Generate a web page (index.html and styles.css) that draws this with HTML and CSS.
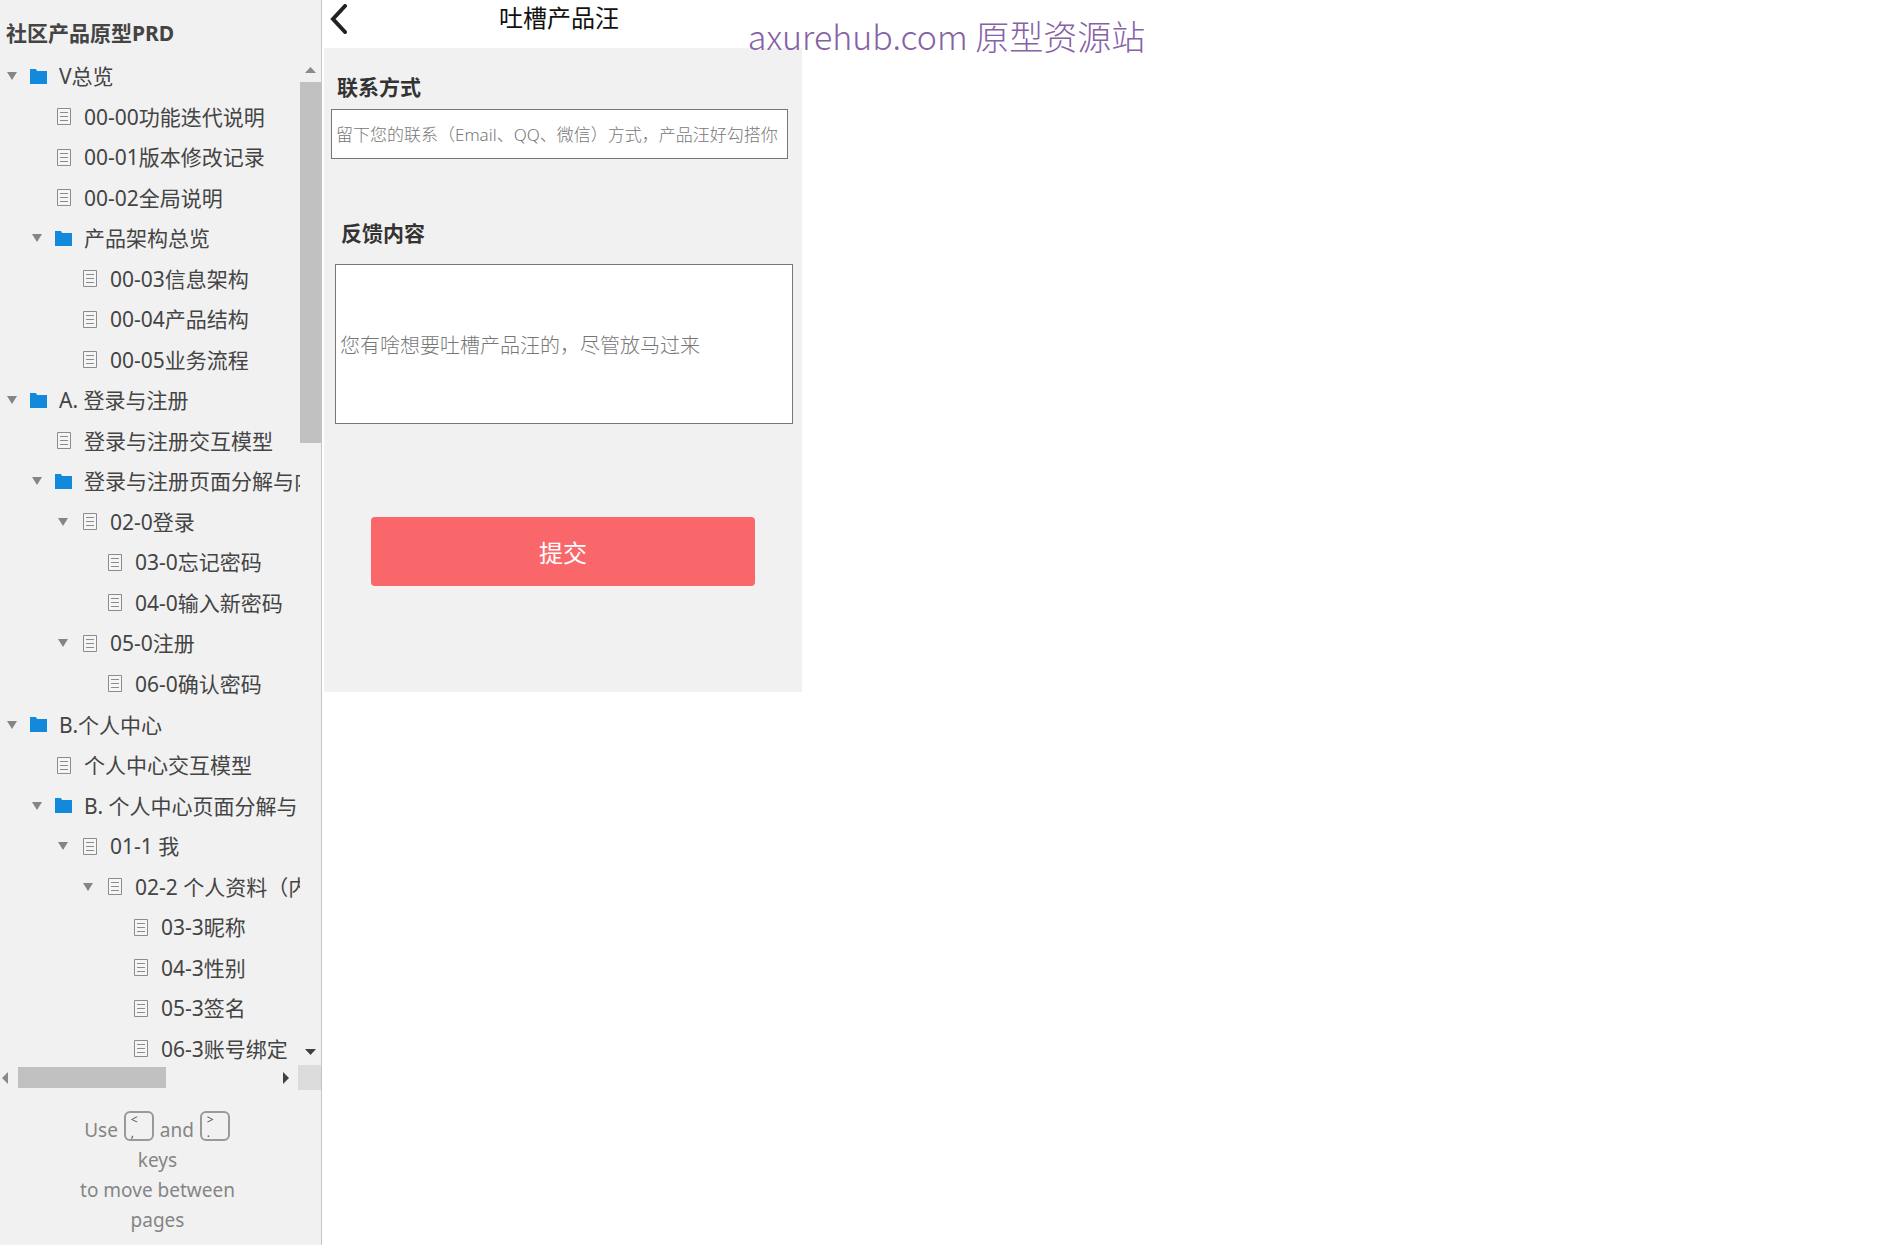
FILE: index.html
```
<!DOCTYPE html>
<html lang="zh-CN">
<head>
    <meta charset="UTF-8">
    <meta name="viewport" content="width=device-width, initial-scale=1.0">
    <title>社区产品原型PRD</title>
    <link rel="stylesheet" href="styles.css">
</head>
<body>
    <svg class="sprite" aria-hidden="true">
        <symbol id="folder" viewBox="0 0 17 17">
            <path d="M0 1h6l1 2h10v13H0z" fill="#1389dc"/>
        </symbol>
        <symbol id="page" viewBox="0 0 17 17">
            <path d="M2.500 .5h13v16h-13z" fill="#f5f5f5" stroke="#8c8c8c"/>
            <path d="M5 4.500h8M5 8.500h8M5 12.500h8" stroke="#8c8c8c"/>
        </symbol>
        <symbol id="arrow" viewBox="0 0 10 8">
            <path d="M0 0h10L5 8z" fill="#858585"/>
        </symbol>
    </svg>

    <div class="app">
        <aside class="sidebar">
            <h1 class="project-title">社区产品原型PRD</h1>

            <div class="tree-area">
                <nav class="tree-view">
                    <ul class="tree">
                        <li class="node level-0"><button class="toggle" aria-label="折叠"><svg><use href="#arrow"/></svg></button><svg class="icon"><use href="#folder"/></svg><a href="#">V总览</a></li>
                        <li class="node level-1"><span class="toggle"></span><svg class="icon"><use href="#page"/></svg><a href="#">00-00功能迭代说明</a></li>
                        <li class="node level-1"><span class="toggle"></span><svg class="icon"><use href="#page"/></svg><a href="#">00-01版本修改记录</a></li>
                        <li class="node level-1"><span class="toggle"></span><svg class="icon"><use href="#page"/></svg><a href="#">00-02全局说明</a></li>
                        <li class="node level-1"><button class="toggle" aria-label="折叠"><svg><use href="#arrow"/></svg></button><svg class="icon"><use href="#folder"/></svg><a href="#">产品架构总览</a></li>
                        <li class="node level-2"><span class="toggle"></span><svg class="icon"><use href="#page"/></svg><a href="#">00-03信息架构</a></li>
                        <li class="node level-2"><span class="toggle"></span><svg class="icon"><use href="#page"/></svg><a href="#">00-04产品结构</a></li>
                        <li class="node level-2"><span class="toggle"></span><svg class="icon"><use href="#page"/></svg><a href="#">00-05业务流程</a></li>
                        <li class="node level-0"><button class="toggle" aria-label="折叠"><svg><use href="#arrow"/></svg></button><svg class="icon"><use href="#folder"/></svg><a href="#">A. 登录与注册</a></li>
                        <li class="node level-1"><span class="toggle"></span><svg class="icon"><use href="#page"/></svg><a href="#">登录与注册交互模型</a></li>
                        <li class="node level-1"><button class="toggle" aria-label="折叠"><svg><use href="#arrow"/></svg></button><svg class="icon"><use href="#folder"/></svg><a href="#">登录与注册页面分解与内</a></li>
                        <li class="node level-2"><button class="toggle" aria-label="折叠"><svg><use href="#arrow"/></svg></button><svg class="icon"><use href="#page"/></svg><a href="#">02-0登录</a></li>
                        <li class="node level-3"><span class="toggle"></span><svg class="icon"><use href="#page"/></svg><a href="#">03-0忘记密码</a></li>
                        <li class="node level-3"><span class="toggle"></span><svg class="icon"><use href="#page"/></svg><a href="#">04-0输入新密码</a></li>
                        <li class="node level-2"><button class="toggle" aria-label="折叠"><svg><use href="#arrow"/></svg></button><svg class="icon"><use href="#page"/></svg><a href="#">05-0注册</a></li>
                        <li class="node level-3"><span class="toggle"></span><svg class="icon"><use href="#page"/></svg><a href="#">06-0确认密码</a></li>
                        <li class="node level-0"><button class="toggle" aria-label="折叠"><svg><use href="#arrow"/></svg></button><svg class="icon"><use href="#folder"/></svg><a href="#">B.个人中心</a></li>
                        <li class="node level-1"><span class="toggle"></span><svg class="icon"><use href="#page"/></svg><a href="#">个人中心交互模型</a></li>
                        <li class="node level-1"><button class="toggle" aria-label="折叠"><svg><use href="#arrow"/></svg></button><svg class="icon"><use href="#folder"/></svg><a href="#">B. 个人中心页面分解与</a></li>
                        <li class="node level-2"><button class="toggle" aria-label="折叠"><svg><use href="#arrow"/></svg></button><svg class="icon"><use href="#page"/></svg><a href="#">01-1 我</a></li>
                        <li class="node level-3"><button class="toggle" aria-label="折叠"><svg><use href="#arrow"/></svg></button><svg class="icon"><use href="#page"/></svg><a href="#">02-2 个人资料（内</a></li>
                        <li class="node level-4"><span class="toggle"></span><svg class="icon"><use href="#page"/></svg><a href="#">03-3昵称</a></li>
                        <li class="node level-4"><span class="toggle"></span><svg class="icon"><use href="#page"/></svg><a href="#">04-3性别</a></li>
                        <li class="node level-4"><span class="toggle"></span><svg class="icon"><use href="#page"/></svg><a href="#">05-3签名</a></li>
                        <li class="node level-4"><span class="toggle"></span><svg class="icon"><use href="#page"/></svg><a href="#">06-3账号绑定</a></li>
                    </ul>
                </nav>
                <div class="scroll-y" aria-hidden="true">
                    <svg class="scroll-cap" viewBox="0 0 21 21"><path d="M5 12h11l-5.500-6z" fill="#8a8a8a"/></svg>
                    <div class="scroll-y-thumb"></div>
                    <svg class="scroll-cap" viewBox="0 0 21 21"><path d="M5 5h11l-5.500 6z" fill="#404040"/></svg>
                </div>
            </div>

            <div class="scroll-x" aria-hidden="true">
                <svg class="scroll-cap-x" viewBox="0 0 18 21"><path d="M8 5v12l-6-6z" fill="#8a8a8a"/></svg>
                <div class="scroll-x-thumb"></div>
                <svg class="scroll-cap-x" viewBox="0 0 18 21"><path d="M3 5v12l6-6z" fill="#404040"/></svg>
                <div class="scroll-corner"></div>
            </div>

            <p class="key-hint">
                Use <kbd><span>&lt;</span><span>,</span></kbd> and <kbd><span>&gt;</span><span>.</span></kbd> keys<br>
                to move between pages
            </p>
        </aside>

        <main class="stage">
            <form class="screen">
                <header class="screen-header">
                    <button class="back" type="button" aria-label="返回">
                        <svg width="18" height="30" viewBox="0 0 18 30"><path d="M15 2L3 15l12 13" fill="none" stroke="#222" stroke-width="4" stroke-linecap="round"/></svg>
                    </button>
                    <h2 class="screen-title">吐槽产品汪</h2>
                </header>
                <div class="field field-contact">
                    <label for="contact">联系方式</label>
                    <input id="contact" type="text" placeholder="留下您的联系（Email、QQ、微信）方式，产品汪好勾搭你">
                </div>
                <div class="field field-feedback">
                    <label for="feedback">反馈内容</label>
                    <textarea id="feedback" placeholder="您有啥想要吐槽产品汪的，尽管放马过来"></textarea>
                </div>
                <button class="submit" type="submit">提交</button>
            </form>
        </main>
    </div>

    <div class="watermark">axurehub.com 原型资源站</div>
</body>
</html>
```
FILE: styles.css
```
* {
    margin: 0;
    padding: 0;
    box-sizing: border-box;
}

body {
    font-family: "Noto Sans", "Noto Sans CJK SC", sans-serif;
    background: #fff;
    color: #444;
    overflow: hidden;
}

button,
input,
textarea {
    font-family: inherit;
    border: none;
}

button {
    background: none;
    cursor: pointer;
}

.sprite {
    display: none;
}

.app {
    display: flex;
    height: 100vh;
}

/* Sidebar */
.sidebar {
    flex: none;
    width: 322px;
    display: flex;
    flex-direction: column;
    background: #f1f1f1;
    border-right: 1px solid #c4c4c4;
}

.project-title {
    height: 56px;
    padding: 18px 6px 0;
    font-size: 21px;
    line-height: 30px;
    font-weight: 700;
}

.tree-area {
    flex: 1;
    min-height: 0;
    display: flex;
}

.tree-view {
    flex: 1;
    min-width: 0;
    overflow: hidden;
}

.tree {
    display: flex;
    flex-direction: column;
    height: calc(100% + 4px);
    list-style: none;
}

.node {
    flex: 1;
    display: flex;
    align-items: center;
    padding-left: 7px;
    font-size: 21px;
    line-height: 30px;
    white-space: nowrap;
}

.level-1 {
    padding-left: 32px;
}

.level-2 {
    padding-left: 58px;
}

.level-3 {
    padding-left: 83px;
}

.level-4 {
    padding-left: 109px;
}

.toggle {
    flex: none;
    display: flex;
    width: 23px;
}

.toggle svg {
    width: 10px;
    height: 8px;
}

.icon {
    flex: none;
    width: 17px;
    height: 17px;
    margin-right: 12px;
}

.node a {
    color: inherit;
    text-decoration: none;
}

.scroll-y {
    flex: none;
    width: 21px;
    padding-top: 5px;
    display: flex;
    flex-direction: column;
}

.scroll-cap {
    flex: none;
    width: 21px;
    height: 21px;
}

.scroll-y-thumb {
    height: 36%;
    margin-bottom: auto;
    background: #c1c1c1;
}

.scroll-x {
    display: flex;
    align-items: center;
    height: 25px;
}

.scroll-cap-x {
    flex: none;
    width: 18px;
    height: 21px;
}

.scroll-x-thumb {
    width: 148px;
    height: 21px;
    margin-right: auto;
    background: #c1c1c1;
}

.scroll-corner {
    width: 23px;
    height: 25px;
    background: #dcdcdc;
}

.key-hint {
    padding: 21px 82px 10px 76px;
    color: #858585;
    font-size: 19px;
    line-height: 30px;
    text-align: center;
}

.key-hint kbd {
    display: inline-flex;
    flex-direction: column;
    width: 30px;
    height: 30px;
    margin: 0 1px 4px;
    padding-left: 5px;
    border: 2px solid #999;
    border-radius: 6px;
    color: #555;
    font-family: inherit;
    font-size: 12px;
    line-height: 13px;
    text-align: left;
    vertical-align: bottom;
}

/* Page preview */
.stage {
    flex: 1;
    min-width: 0;
    padding-left: 2px;
}

.screen {
    display: flex;
    flex-direction: column;
    max-width: 478px;
    padding-bottom: 106px;
    background: #f1f1f1;
}

.screen-header {
    display: grid;
    grid-template-columns: 40px 1fr 48px;
    height: 48px;
    background: #fff;
}

.back {
    display: flex;
    padding: 4px 6px;
}

.screen-title {
    color: #111;
    font-size: 24px;
    line-height: 36px;
    font-weight: 400;
    text-align: center;
}

.field {
    display: flex;
    flex-direction: column;
}

.field label {
    padding-left: 6px;
    color: #333;
    font-size: 21px;
    line-height: 30px;
    font-weight: 700;
}

.field input,
.field textarea {
    border: 1px solid #777;
    background: #fff;
    color: #333;
    font-weight: 300;
    resize: none;
}

.field ::placeholder {
    color: #777;
}

.field-contact {
    padding: 24px 14px 0 7px;
}

.field-contact input {
    height: 50px;
    margin-top: 7px;
    padding: 0 4px;
    font-size: 17px;
}

.field-feedback {
    padding: 59px 9px 0 11px;
}

.field-feedback textarea {
    height: 160px;
    margin-top: 16px;
    padding: 66px 4px 0;
    font-size: 20px;
    line-height: 30px;
}

.submit {
    height: 69px;
    margin: 93px 47px 0;
    border-radius: 4px;
    background: #fa676a;
    color: #fff;
    font-size: 24px;
}

/* Site banner over the preview */
.watermark {
    position: absolute;
    top: 11px;
    left: 0;
    right: 0;
    color: #8562a5;
    font-family: "Noto Sans CJK SC", sans-serif;
    font-size: 34px;
    line-height: 50px;
    font-weight: 300;
    text-align: center;
    pointer-events: none;
}
```
